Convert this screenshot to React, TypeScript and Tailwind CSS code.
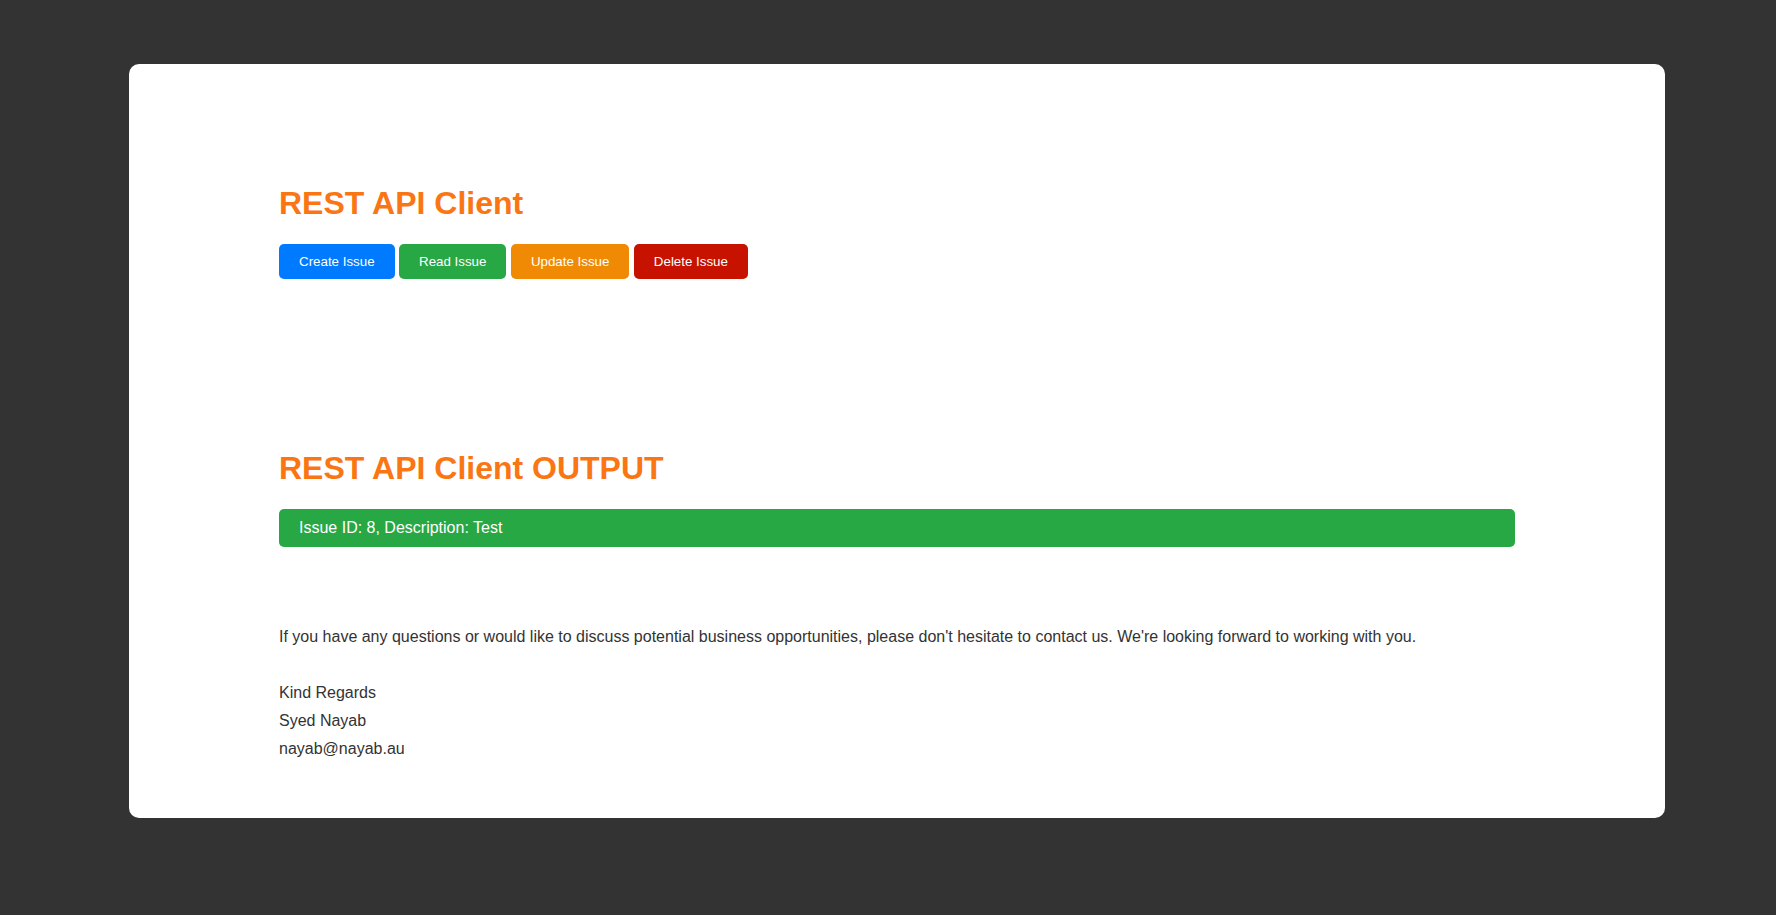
import React from 'react';

const actions = [
  { label: 'Create Issue', color: 'bg-[#007bff]' },
  { label: 'Read Issue', color: 'bg-[#28a745]' },
  { label: 'Update Issue', color: 'bg-[#f08a04]' },
  { label: 'Delete Issue', color: 'bg-[#c81200]' },
];

export default function App() {
  return (
    <div
      className="min-h-screen bg-[#333333] pt-[64px] pl-[129px] pb-[97px]"
      style={{ fontFamily: '"Liberation Sans", Arial, sans-serif' }}
    >
      <div className="w-[1536px] rounded-[10px] bg-white px-[150px] pt-[100px] pb-[55px] text-[#333333]">
        {/* Client section */}
        <h1 className="mt-[21px] mb-[22px] text-[32px] leading-[37px] font-bold text-[#fa7614]">
          REST API Client
        </h1>
        <div className="flex gap-[4.45px]">
          {actions.map((a) => (
            <button
              key={a.label}
              type="button"
              className={`${a.color} rounded-[5px] px-[20px] py-[10px] text-[13.33px] leading-[15px] text-white`}
            >
              {a.label}
            </button>
          ))}
        </div>

        {/* Output section */}
        <h2 className="mt-[171px] mb-[22px] text-[32px] leading-[37px] font-bold text-[#fa7614]">
          REST API Client OUTPUT
        </h2>
        <div className="rounded-[5px] bg-[#28a745] px-[20px] py-[10px] text-[16px] leading-[18px] text-white">
          Issue ID: 8, Description: Test
        </div>

        <p className="mt-[76px] text-[16px] leading-[28px] text-[#333333]">
          If you have any questions or would like to discuss potential business opportunities, please don't hesitate to contact us. We're looking forward to working with you.
          <br />
          <br />
          Kind Regards
          <br />
          Syed Nayab
          <br />
          nayab@nayab.au
        </p>
      </div>
    </div>
  );
}
